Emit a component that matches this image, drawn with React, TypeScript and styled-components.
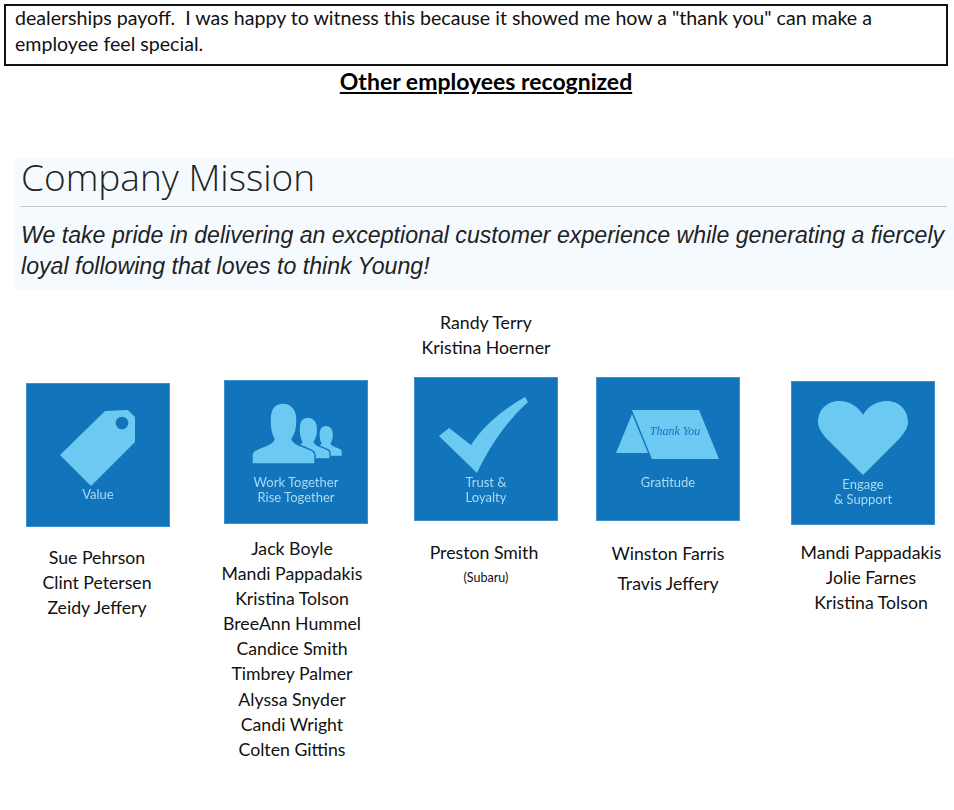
import styled, { createGlobalStyle } from "styled-components";

const GlobalStyle = createGlobalStyle`
  html, body {
    margin: 0;
    padding: 0;
    background: #fff;
    overflow: hidden;
  }
`;

const personPath =
  "M28 84 V75 C28 71 31 70 38 67 C44 65 49 63 50 59 C47 54 46 47 46 40 C46 29 51 23 59 23 C67 23 73 29 73 40 C73 47 72 54 68 59 C69 63 74 65 80 67 C87 70 91 71 91 75 V84 Z";

const TagIcon = () => (
  <Icon viewBox="0 0 144 90">
    <path d="M34 72 L79 28 L102 27 L109 34 L109 59 L65 103 Z" fill="#6ccaf2" />
    <circle cx="96" cy="40" r="6.3" fill="#1274bb" />
  </Icon>
);

const PeopleIcon = () => (
  <Icon viewBox="0 0 144 90">
    <path d={personPath} transform="translate(73.1 34.7) scale(0.49)" fill="#6ccaf2" />
    <path d={personPath} transform="translate(43.3 21.1) scale(0.69)" fill="#6ccaf2" stroke="#1274bb" strokeWidth="2" />
    <path d={personPath} fill="#6ccaf2" stroke="#1274bb" strokeWidth="1.4" />
  </Icon>
);

const CheckIcon = () => (
  <Icon viewBox="0 0 144 90">
    <path d="M25 59 L35 51 L57 68 C70 48 90 32 111 20 L114 25 C92 45 75 70 63 96 Z" fill="#6ccaf2" />
  </Icon>
);

const CardIcon = () => (
  <Icon viewBox="0 0 144 90">
    <path d="M20 76 L36 37 L52 76 Z" fill="#6ccaf2" />
    <path d="M36 33 L103 33 L123 82 L56 82 Z" fill="#6ccaf2" />
    <text x="79" y="58" textAnchor="middle" fontFamily="'Liberation Serif', serif" fontStyle="italic" fontSize="12" fill="#1274bb">
      Thank You
    </text>
  </Icon>
);

const HeartIcon = () => (
  <Icon viewBox="0 0 144 90">
    <path
      d="M72 94 L35 57 C30 51 27 46 27 41 C27 29 36 20 48 20 C58 20 67 25 72 34 C77 25 86 20 96 20 C108 20 117 29 117 41 C117 46 114 51 109 57 Z"
      fill="#6ccaf2"
    />
  </Icon>
);

const columns = [
  {
    left: 26,
    top: 74,
    namesTop: 18,
    namesShift: -1,
    icon: <TagIcon />,
    caption: ["Value"],
    captionTop: 14,
    names: ["Sue Pehrson", "Clint Petersen", "Zeidy Jeffery"],
  },
  {
    left: 54,
    top: 71,
    namesTop: 12,
    namesShift: -4,
    icon: <PeopleIcon />,
    caption: ["Work Together", "Rise Together"],
    captionTop: 5,
    names: [
      "Jack Boyle",
      "Mandi Pappadakis",
      "Kristina Tolson",
      "BreeAnn Hummel",
      "Candice Smith",
      "Timbrey Palmer",
      "Alyssa Snyder",
      "Candi Wright",
      "Colten Gittins",
    ],
  },
  {
    left: 46,
    top: 1,
    namesTop: 19,
    namesShift: -2,
    above: ["Randy Terry", "Kristina Hoerner"],
    icon: <CheckIcon />,
    caption: ["Trust &", "Loyalty"],
    captionTop: 8,
    names: ["Preston Smith"],
    note: "(Subaru)",
  },
  {
    left: 38,
    top: 68,
    namesTop: 18,
    namesShift: 0,
    namesGap: 30,
    icon: <CardIcon />,
    caption: ["Gratitude"],
    captionTop: 8,
    names: ["Winston Farris", "Travis Jeffery"],
  },
  {
    left: 51,
    top: 72,
    namesTop: 15,
    namesShift: 8,
    icon: <HeartIcon />,
    caption: ["Engage", "& Support"],
    captionTop: 6,
    names: ["Mandi Pappadakis", "Jolie Farnes", "Kristina Tolson"],
  },
];

export default function App() {
  return (
    <Page>
      <GlobalStyle />
      <StoryBox>
        <StoryText>
          dealerships payoff.&nbsp; I was happy to witness this because it showed me how a "thank you" can make a employee feel special.
        </StoryText>
      </StoryBox>
      <SectionTitle>Other employees recognized</SectionTitle>
      <MissionPanel>
        <MissionHeading>Company Mission</MissionHeading>
        <MissionText>
          We take pride in delivering an exceptional customer experience while generating a fiercely loyal following that loves to think Young!
        </MissionText>
      </MissionPanel>
      <ValuesRow>
        {columns.map((col) => (
          <ValueColumn key={col.caption[0]} $left={col.left} $top={col.top}>
            {col.above && (
              <AboveNames>
                {col.above.map((n) => (
                  <Name key={n}>{n}</Name>
                ))}
              </AboveNames>
            )}
            <ValueCard>
              {col.icon}
              <Caption $top={col.captionTop}>
                {col.caption.map((c) => (
                  <div key={c}>{c}</div>
                ))}
              </Caption>
            </ValueCard>
            <NameList $top={col.namesTop} $shift={col.namesShift}>
              {col.names.map((n) => (
                <Name key={n} $height={col.namesGap}>
                  {n}
                </Name>
              ))}
              {col.note && <Note>{col.note}</Note>}
            </NameList>
          </ValueColumn>
        ))}
      </ValuesRow>
    </Page>
  );
}

const Page = styled.div`
  width: 954px;
  height: 810px;
  padding-top: 4px;
  box-sizing: border-box;
  overflow: hidden;
  font-family: "Lato", "Liberation Sans", sans-serif;
  color: #111;
`;

const StoryBox = styled.div`
  width: 944px;
  height: 62px;
  margin-left: 4px;
  box-sizing: border-box;
  border: 2px solid #111;
  padding: 0 9px;
`;

const StoryText = styled.div`
  margin-top: -1px;
  font-size: 19.6px;
  line-height: 26px;
`;

const SectionTitle = styled.div`
  text-align: center;
  width: 972px;
  font-size: 23px;
  line-height: 30px;
  font-weight: 700;
  text-decoration: underline;
  color: #000;
`;

const MissionPanel = styled.div`
  margin: 62px 0 0 15px;
  height: 131px;
  box-sizing: border-box;
  background: #f5faff;
  padding-left: 5px;
`;

const MissionHeading = styled.div`
  height: 48px;
  margin-right: 7px;
  border-bottom: 1px solid #c4c9ce;
  font-family: "Open Sans", sans-serif;
  font-weight: 300;
  font-size: 37px;
  line-height: 38px;
  color: #222;
  padding-left: 1px;
`;

const MissionText = styled.div`
  margin-top: 13px;
  padding-left: 1px;
  font-family: "Liberation Sans", Arial, sans-serif;
  font-style: italic;
  font-size: 23.15px;
  line-height: 31px;
  color: #222;
`;

const ValuesRow = styled.div`
  display: flex;
  align-items: flex-start;
  margin-top: 20px;
`;

const ValueColumn = styled.div<{ $left: number; $top: number }>`
  width: 144px;
  flex: none;
  display: flex;
  flex-direction: column;
  align-items: center;
  margin-left: ${({ $left }) => $left}px;
  margin-top: ${({ $top }) => $top}px;
`;

const AboveNames = styled.div`
  width: 220px;
  margin-bottom: 17px;
  text-align: center;
`;

const ValueCard = styled.div`
  width: 144px;
  height: 144px;
  flex: none;
  box-sizing: border-box;
  background: #1274bb;
  box-shadow: inset 0 0 0 1px #3f92cf;
  overflow: hidden;
`;

const Icon = styled.svg`
  display: block;
  width: 144px;
  height: 90px;
  overflow: visible;
  filter: blur(0.4px);
`;

const Caption = styled.div<{ $top: number }>`
  margin-top: ${({ $top }) => $top}px;
  font-family: "Lato", sans-serif;
  font-size: 13px;
  line-height: 15px;
  text-align: center;
  color: #a9daf3;
  filter: blur(0.3px);
`;

const NameList = styled.div<{ $top: number; $shift: number }>`
  width: 220px;
  margin-top: ${({ $top }) => $top}px;
  margin-left: ${({ $shift }) => $shift * 2}px;
  text-align: center;
  flex: none;
  align-self: center;
`;

const Name = styled.div<{ $height?: number }>`
  font-size: 17.7px;
  line-height: ${({ $height }) => $height ?? 25.1}px;
  white-space: nowrap;
  color: #111;
`;

const Note = styled.div`
  margin-left: 4px;
  font-size: 12.5px;
  line-height: 25px;
  color: #111;
`;
